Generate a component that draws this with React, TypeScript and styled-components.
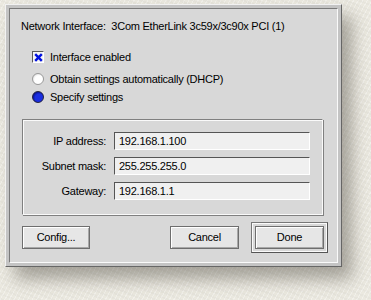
import React from "react";
import styled, { createGlobalStyle } from "styled-components";

const Global = createGlobalStyle`
  html, body { margin: 0; padding: 0; }
  body {
    background-color: #ebe9e0;
    background-image:
      repeating-linear-gradient(23deg, rgba(0,0,0,0.018) 0 2px, transparent 2px 5px),
      repeating-linear-gradient(-61deg, rgba(255,255,255,0.35) 0 1px, transparent 1px 4px);
    width: 371px;
    height: 300px;
    overflow: hidden;
    font-family: "Liberation Sans", Arial, sans-serif;
    font-size: 11px;
    letter-spacing: -0.25px;
    color: #000;
  }
`;

const Page = styled.div`
  padding: 4px 0 0 5px;
`;

const Window = styled.div`
  width: 337px;
  height: 263px;
  box-sizing: border-box;
  border: 1px solid;
  border-color: #f2f2f2 #666 #666 #f2f2f2;
  background: #c4c4c4;
  padding: 3px;
  box-shadow: 10px 12px 16px rgba(60, 55, 45, 0.4);
`;

const Panel = styled.div`
  height: 100%;
  box-sizing: border-box;
  border: 1px solid;
  border-color: #7a7a7a #fafafa #fafafa #7a7a7a;
  background: #d8d8d8;
  padding: 0 3px 0 10px;
  display: flex;
  flex-direction: column;
`;

const Title = styled.div`
  margin: 10px 0 0 1px;
  height: 14px;
  line-height: 14px;
  white-space: pre;
`;

const Options = styled.div`
  margin: 17px 0 0 12px;
  display: flex;
  flex-direction: column;
`;

const OptionRow = styled.div<{ $gap: number }>`
  display: flex;
  align-items: center;
  height: 14px;
  margin-top: ${(p) => p.$gap}px;
  gap: 6px;
`;

const CheckBox = styled.span`
  width: 10px;
  height: 10px;
  box-sizing: content-box;
  border: 1px solid;
  border-color: #5a5a5a #fff #fff #5a5a5a;
  background: #f4f4f4;
  display: inline-flex;
  align-items: center;
  justify-content: center;
`;

const Radio = styled.span<{ $on?: boolean }>`
  width: 12px;
  height: 12px;
  border-radius: 50%;
  box-sizing: border-box;
  background: ${(p) =>
    p.$on
      ? "radial-gradient(circle at 60% 60%, #1a2ee0 0 45%, #0a16a0 70%, #000050 100%)"
      : "radial-gradient(circle at 60% 60%, #ffffff 0 50%, #e4e4e4 75%, #8a8a8a 100%)"};
  border: 1px solid ${(p) => (p.$on ? "#202040" : "#9a9a9a")};
`;

const Group = styled.div`
  margin: 15px 11px 0 2px;
  height: 96px;
  box-sizing: border-box;
  border: 1px solid;
  border-color: #808080 #fafafa #fafafa #808080;
  box-shadow: inset 1px 1px 0 #fafafa, 1px 1px 0 #808080;
  display: grid;
  grid-template-columns: 83px 196px;
  grid-auto-rows: 18px;
  row-gap: 7px;
  column-gap: 8px;
  align-content: start;
  padding-top: 12px;
`;

const FieldLabel = styled.label`
  text-align: right;
  line-height: 18px;
`;

const Field = styled.div`
  box-sizing: border-box;
  height: 18px;
  border: 1px solid;
  border-color: #555 #fff #fff #555;
  background: #f0f0f0;
  padding: 0 0 0 4px;
  line-height: 16px;
`;

const ButtonBar = styled.div`
  margin: 7px 6px 0 2px;
  display: flex;
  align-items: center;
  height: 30px;
`;

const Spacer = styled.div`
  flex: 1;
`;

const Button = styled.button<{ $w: number }>`
  width: ${(p) => p.$w}px;
  height: 23px;
  box-sizing: border-box;
  font-family: inherit;
  font-size: 11px;
  letter-spacing: -0.25px;
  color: #000;
  background: #e6e6e6;
  border: 1px solid #6e6e6e;
  box-shadow: inset 1px 1px 0 #fff, inset -1px -1px 0 #a8a8a8;
  padding: 0;
`;

const DefaultFrame = styled.div`
  margin-left: 12px;
  padding: 3px;
  border: 1px solid;
  border-color: #777 #555 #555 #777;
  box-shadow: inset 1px 1px 0 #fafafa, inset -1px -1px 0 #fafafa;
  display: flex;
`;

export default function App() {
  return (
    <>
      <Global />
      <Page>
        <Window>
          <Panel>
            <Title>{"Network Interface:  3Com EtherLink 3c59x/3c90x PCI (1)"}</Title>
            <Options>
              <OptionRow $gap={0}>
                <CheckBox>
                  <svg width="9" height="9" viewBox="0 0 9 9">
                    <path d="M1.2 1.2 L7.8 7.8 M7.8 1.2 L1.2 7.8" stroke="#0010e0" strokeWidth="2.4" />
                  </svg>
                </CheckBox>
                <span>Interface enabled</span>
              </OptionRow>
              <OptionRow $gap={8}>
                <Radio />
                <span>Obtain settings automatically (DHCP)</span>
              </OptionRow>
              <OptionRow $gap={4}>
                <Radio $on />
                <span>Specify settings</span>
              </OptionRow>
            </Options>
            <Group>
              <FieldLabel>IP address:</FieldLabel>
              <Field>192.168.1.100</Field>
              <FieldLabel>Subnet mask:</FieldLabel>
              <Field>255.255.255.0</Field>
              <FieldLabel>Gateway:</FieldLabel>
              <Field>192.168.1.1</Field>
            </Group>
            <ButtonBar>
              <Button $w={68}>Config...</Button>
              <Spacer />
              <Button $w={69}>Cancel</Button>
              <DefaultFrame>
                <Button $w={69}>Done</Button>
              </DefaultFrame>
            </ButtonBar>
          </Panel>
        </Window>
      </Page>
    </>
  );
}
